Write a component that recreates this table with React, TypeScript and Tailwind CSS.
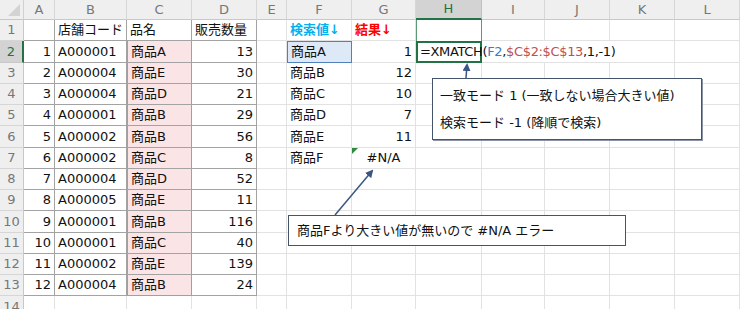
import React from "react";

const rows: [number, string, string, number][] = [
  [1, "A000001", "商品A", 13],
  [2, "A000004", "商品E", 30],
  [3, "A000004", "商品D", 21],
  [4, "A000001", "商品B", 29],
  [5, "A000002", "商品B", 56],
  [6, "A000002", "商品C", 8],
  [7, "A000004", "商品D", 52],
  [8, "A000005", "商品E", 11],
  [9, "A000001", "商品B", 116],
  [10, "A000001", "商品C", 40],
  [11, "A000002", "商品E", 139],
  [12, "A000004", "商品B", 24],
];

const lookup = ["商品A", "商品B", "商品C", "商品D", "商品E", "商品F"];
const results = ["1", "12", "10", "7", "11"];

const letters = ["A", "B", "C", "D", "E", "F", "G", "H", "I", "J", "K", "L"];

const grid = "border-r border-b border-r-[#e2e2e2] border-b-[#e2e2e2]";
const tbl = "border-r border-b border-r-[#a3a3a3] border-b-[#a3a3a3]";
const rangeC =
  "bg-[#fbe4e6] shadow-[inset_1px_0_0_#d9868c,inset_-1px_0_0_#d9868c]";

function Header() {
  return (
    <>
      <div className="relative bg-[#efefef] border-r border-b border-r-[#d0d0d0] border-b-[#c8c8c8]">
        <div className="absolute bottom-[3px] right-[3px] w-0 h-0 border-l-[12px] border-l-transparent border-b-[12px] border-b-[#d3d3d3]" />
      </div>
      {letters.map((l) =>
        l === "H" ? (
          <div
            key={l}
            className="flex items-center justify-center bg-[#d3d3d3] text-[#217346] border-r border-r-[#c0c0c0] border-b-2 border-b-[#217346]"
          >
            {l}
          </div>
        ) : (
          <div
            key={l}
            className="flex items-center justify-center bg-[#efefef] text-[#777] border-r border-b border-r-[#d6d6d6] border-b-[#c8c8c8]"
          >
            {l}
          </div>
        )
      )}
    </>
  );
}

function RowNum({ n }: { n: number }) {
  if (n === 2)
    return (
      <div className="flex items-center justify-center bg-[#d3d3d3] text-[#217346] border-r-2 border-b border-r-[#217346] border-b-[#c8c8c8]">
        {n}
      </div>
    );
  return (
    <div className="flex items-center justify-center bg-[#efefef] text-[#777] border-r border-b border-r-[#c8c8c8] border-b-[#d6d6d6]">
      {n}
    </div>
  );
}

function Blank({ cls = grid }: { cls?: string }) {
  return <div className={cls} />;
}

function App() {
  const body: React.ReactNode[] = [];

  for (let r = 1; r <= 14; r++) {
    const cells: React.ReactNode[] = [<RowNum key="n" n={r} />];
    const d = r >= 2 && r <= 13 ? rows[r - 2] : null;

    // A-D table
    if (r === 1) {
      cells.push(<Blank key="a" cls={tbl} />);
      cells.push(
        <div key="b" className={`${tbl} flex items-center px-[3px]`}>
          店舗コード
        </div>
      );
      cells.push(
        <div key="c" className={`${tbl} flex items-center px-[3px]`}>
          品名
        </div>
      );
      cells.push(
        <div key="d" className={`${tbl} flex items-center px-[3px]`}>
          販売数量
        </div>
      );
    } else if (d) {
      cells.push(
        <div key="a" className={`${tbl} flex items-center justify-end px-[3px]`}>
          {d[0]}
        </div>
      );
      cells.push(
        <div key="b" className={`${tbl} flex items-center px-[3px]`}>
          {d[1]}
        </div>
      );
      cells.push(
        <div
          key="c"
          className={`${rangeC} border-b ${
            r === 13 ? "border-b-[#d9868c]" : "border-b-[#a3a3a3]"
          } flex items-center px-[4px]`}
        >
          {d[2]}
        </div>
      );
      cells.push(
        <div key="d" className={`${tbl} flex items-center justify-end px-[3px]`}>
          {d[3]}
        </div>
      );
    } else {
      cells.push(<Blank key="a" />, <Blank key="b" />, <Blank key="c" />, <Blank key="d" />);
    }

    // E
    cells.push(<Blank key="e" />);

    // F, G
    if (r === 1) {
      cells.push(
        <div key="f" className={`${grid} flex items-center px-[3px] font-bold text-[#00b0f0]`}>
          検索値↓
        </div>
      );
      cells.push(
        <div key="g" className={`${grid} flex items-center px-[3px] font-bold text-[#ff0000]`}>
          結果↓
        </div>
      );
    } else if (r >= 2 && r <= 7) {
      cells.push(
        <div
          key="f"
          className={
            r === 2
              ? "flex items-center px-[3px] bg-[#dde9f6] border border-[#4f81bd]"
              : `${grid} flex items-center px-[3px]`
          }
        >
          {lookup[r - 2]}
        </div>
      );
      if (r === 7) {
        cells.push(
          <div key="g" className={`${grid} relative flex items-center justify-center`}>
            <div className="absolute top-0 left-0 w-0 h-0 border-t-[6px] border-t-[#2f8a3c] border-r-[6px] border-r-transparent" />
            #N/A
          </div>
        );
      } else {
        cells.push(
          <div key="g" className={`${grid} flex items-center justify-end px-[3px]`}>
            {results[r - 2]}
          </div>
        );
      }
    } else {
      cells.push(<Blank key="f" />, <Blank key="g" />);
    }

    // H..L
    if (r === 1) {
      cells.push(
        <Blank key="h" cls="border-x border-[#5b9a74] border-b-0" />
      );
    } else if (r === 2) {
      cells.push(
        <div
          key="h"
          className="relative z-10 flex items-center border-2 border-[#217346] pl-[2px] whitespace-nowrap tracking-[-0.35px]"
        >
          <span>
            =XMATCH(<span className="text-[#3b7dc4]">F2</span>,
            <span className="text-[#c0504d]">$C$2:$C$13</span>,1,-1)
          </span>
          <span className="inline-block w-px h-[16px] bg-black ml-[1px]" />
        </div>
      );
    } else {
      cells.push(<Blank key="h" />);
    }
    if (r === 2) {
      cells.push(
        <Blank key="i" cls="border-b border-b-[#e2e2e2]" />,
        <Blank key="j" cls="border-b border-b-[#e2e2e2]" />
      );
    } else {
      cells.push(<Blank key="i" />, <Blank key="j" />);
    }
    cells.push(<Blank key="k" />, <Blank key="l" />);

    body.push(<React.Fragment key={r}>{cells}</React.Fragment>);
  }

  return (
    <div className="w-[740px] h-[309px] overflow-hidden bg-white relative font-['DejaVu_Sans','Noto_Sans_CJK_JP',sans-serif] text-[13px] text-[#111]">
      <div className="grid grid-cols-[24px_31px_72px_65px_65px_30px_65px_64px_66px_63px_65px_65px_65px] grid-rows-[20px] auto-rows-[21.25px]">
        <Header />
        {body}
      </div>

      <svg
        className="absolute inset-0 pointer-events-none z-20"
        width="740"
        height="309"
        viewBox="0 0 740 309"
      >
        <defs>
          <marker
            id="ah"
            markerWidth="8"
            markerHeight="8"
            refX="6"
            refY="4"
            orient="auto"
            markerUnits="userSpaceOnUse"
          >
            <path d="M0,0 L8,4 L0,8 z" fill="#3a5683" />
          </marker>
        </defs>
        <line x1="466" y1="78" x2="467" y2="65" stroke="#3a5683" strokeWidth="1.5" markerEnd="url(#ah)" />
        <line x1="335" y1="215" x2="372" y2="171" stroke="#3a5683" strokeWidth="1.5" markerEnd="url(#ah)" />
      </svg>

      <div className="absolute left-[432px] top-[78px] w-[270px] h-[62px] z-20 bg-white border-[1.5px] border-[#44546a] shadow-[1px_1px_0_#8a94a6] flex flex-col justify-center gap-[7px] pl-[7px]">
        <div>一致モード 1 (一致しない場合大きい値)</div>
        <div>検索モード -1 (降順で検索)</div>
      </div>

      <div className="absolute left-[288px] top-[215px] w-[338px] h-[31px] z-20 bg-white border-[1.5px] border-[#44546a] flex items-center pl-[8px]">
        商品Fより大きい値が無いので #N/A エラー
      </div>
    </div>
  );
}

export default App;
